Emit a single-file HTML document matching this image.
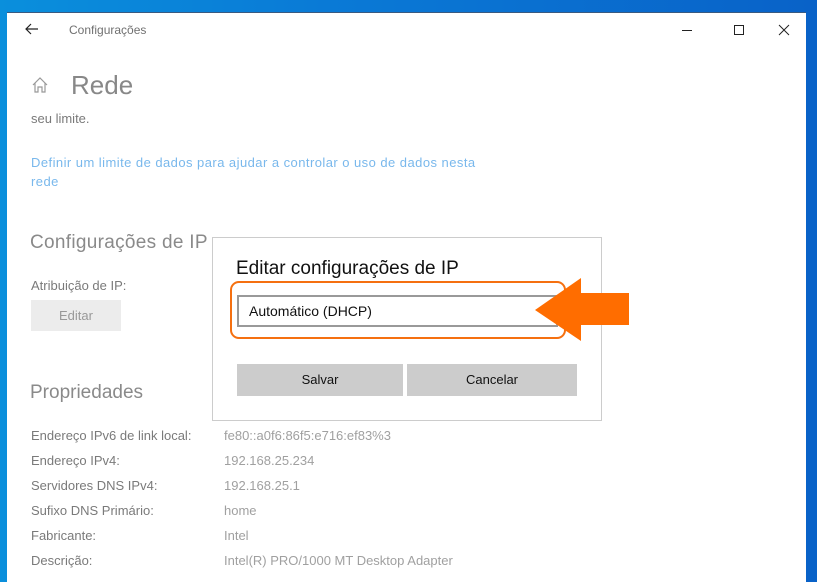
<!DOCTYPE html>
<html><head><meta charset="utf-8"><style>
*{margin:0;padding:0;box-sizing:border-box}
body{width:817px;height:574px;overflow:hidden;position:relative;font-family:"Liberation Sans",sans-serif;background:linear-gradient(90deg,#0a8fdc 0%,#0a7ad6 40%,#0962c8 100%)}
.win{position:absolute;left:7px;top:12px;width:799px;height:570px;background:#fff;border-top:1px solid #3a5a80}
.t{position:absolute;white-space:nowrap}
.g{color:#7a7a7a}
.l{color:#a0a0a0}
</style></head><body>
<div class="win"></div>
<svg class="t" style="left:24px;top:22px" width="16" height="14" viewBox="0 0 16 14"><path d="M14 7H2M7 2L2 7l5 5" fill="none" stroke="#222" stroke-width="1.2"/></svg>
<div class="t" style="left:69px;top:23px;font-size:12px;color:#707070">Configurações</div>
<svg class="t" style="left:682px;top:24px" width="110" height="12"><path d="M0 6.5h10" stroke="#222" stroke-width="1"/><rect x="52.5" y="1.5" width="9" height="9" fill="none" stroke="#222"/><path d="M97 1l10 10M107 1L97 11" stroke="#222" stroke-width="1"/></svg>
<svg class="t" style="left:31px;top:76px" width="18" height="18" viewBox="0 0 18 18"><path d="M2 9L9 2l7 7M4 7v9h3v-5h4v5h3V7" fill="none" stroke="#999" stroke-width="1.2"/></svg>
<div class="t" style="left:71px;top:70px;font-size:26px;color:#888">Rede</div>
<div class="t g" style="left:31px;top:111px;font-size:13px">seu limite.</div>
<div class="t" style="left:31px;top:153px;font-size:13px;color:#79b8ec;line-height:19px;letter-spacing:0.45px">Definir um limite de dados para ajudar a controlar o uso de dados nesta<br>rede</div>
<div class="t" style="left:30px;top:232px;font-size:19px;color:#8a8a8a;letter-spacing:0.3px">Configurações de IP</div>
<div class="t g" style="left:31px;top:278px;font-size:13px">Atribuição de IP:</div>
<div class="t" style="left:31px;top:300px;width:90px;height:31px;background:#ececec;color:#999;font-size:13px;text-align:center;line-height:31px">Editar</div>
<div class="t" style="left:30px;top:382px;font-size:19px;color:#8a8a8a">Propriedades</div>
<div class="t g" style="left:31px;top:423px;font-size:13px;line-height:25px">Endereço IPv6 de link local:<br>Endereço IPv4:<br>Servidores DNS IPv4:<br>Sufixo DNS Primário:<br>Fabricante:<br>Descrição:</div>
<div class="t l" style="left:224px;top:423px;font-size:13px;line-height:25px">fe80::a0f6:86f5:e716:ef83%3<br>192.168.25.234<br>192.168.25.1<br>home<br>Intel<br>Intel(R) PRO/1000 MT Desktop Adapter</div>

<div class="t" style="left:212px;top:237px;width:390px;height:184px;background:#fff;border:1px solid #ccc"></div>
<div class="t" style="left:236px;top:258px;font-size:19px;color:#111">Editar configurações de IP</div>
<div class="t" style="left:230px;top:281px;width:336px;height:58px;border:2px solid #f57010;border-radius:9px"></div>
<div class="t" style="left:237px;top:295px;width:321px;height:32px;border:2px solid #999;background:#fff"></div>
<div class="t" style="left:249px;top:303px;font-size:14px;color:#111">Automático (DHCP)</div>
<svg class="t" style="left:533px;top:277px" width="98" height="65"><path d="M2 33L48 1v15h48v32H48v16z" fill="#ff6d00"/></svg>
<div class="t" style="left:237px;top:364px;width:166px;height:32px;background:#ccc;font-size:13px;color:#111;text-align:center;line-height:32px">Salvar</div>
<div class="t" style="left:407px;top:364px;width:170px;height:32px;background:#ccc;font-size:13px;color:#111;text-align:center;line-height:32px">Cancelar</div>
</body></html>
